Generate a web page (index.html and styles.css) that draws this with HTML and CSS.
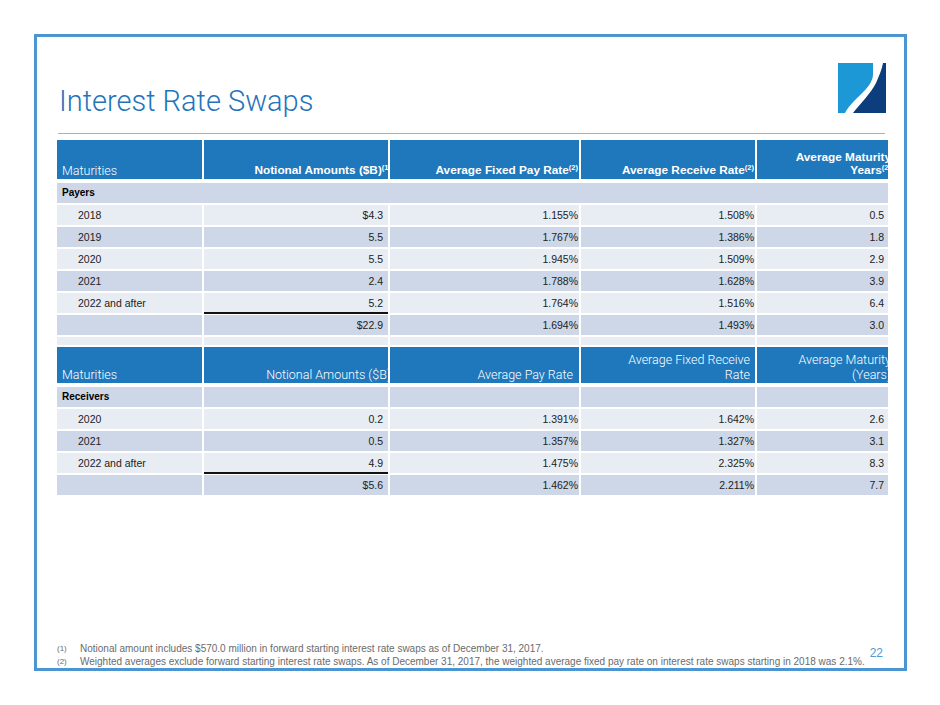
FILE: index.html
```html
<!DOCTYPE html>
<html lang="en">
<head>
<meta charset="utf-8">
<title>Interest Rate Swaps</title>
<link rel="stylesheet" href="styles.css">
</head>
<body>
<div class="slide">
  <header class="top">
    <h1 class="title">Interest Rate Swaps</h1>
    <svg class="logo" width="48" height="50" viewBox="0 0 48 50" aria-hidden="true">
      <path d="M0 0H35V12C34 26 14 36 7 50H0Z" fill="#1b98d5"/>
      <path d="M45 0H48V50H15C22 41 33 30 38 20C41 13 44 6 45 0Z" fill="#0c3d7c"/>
    </svg>
  </header>
  <div class="rule"></div>

  <div class="grid">
    <div class="hd h1 first"><span>Maturities</span></div>
    <div class="hd h1 bold over"><span>Notional Amounts ($B)<sup>(1)</sup></span></div>
    <div class="hd h1 bold pr1"><span>Average Fixed Pay Rate<sup>(2)</sup></span></div>
    <div class="hd h1 bold pr1"><span>Average Receive Rate<sup>(2)</sup></span></div>
    <div class="hd h1 bold over"><span>Average Maturity<br>Years<sup>(2)</sup></span></div>

    <div class="group dk">Payers</div>

    <div class="cell lt yr">2018</div><div class="cell lt p2">$4.3</div><div class="cell lt p3">1.155%</div><div class="cell lt p3">1.508%</div><div class="cell lt p5">0.5</div>
    <div class="cell dk yr">2019</div><div class="cell dk p2">5.5</div><div class="cell dk p3">1.767%</div><div class="cell dk p3">1.386%</div><div class="cell dk p5">1.8</div>
    <div class="cell lt yr">2020</div><div class="cell lt p2">5.5</div><div class="cell lt p3">1.945%</div><div class="cell lt p3">1.509%</div><div class="cell lt p5">2.9</div>
    <div class="cell dk yr">2021</div><div class="cell dk p2">2.4</div><div class="cell dk p3">1.788%</div><div class="cell dk p3">1.628%</div><div class="cell dk p5">3.9</div>
    <div class="cell lt yr">2022 and after</div><div class="cell lt p2 sum">5.2</div><div class="cell lt p3">1.764%</div><div class="cell lt p3">1.516%</div><div class="cell lt p5">6.4</div>
    <div class="cell dk yr"></div><div class="cell dk p2">$22.9</div><div class="cell dk p3">1.694%</div><div class="cell dk p3">1.493%</div><div class="cell dk p5">3.0</div>

    <div class="spacer lt"></div><div class="spacer lt"></div><div class="spacer lt"></div><div class="spacer lt"></div><div class="spacer lt"></div>

    <div class="hd h2 first"><span>Maturities</span></div>
    <div class="hd h2 over"><span>Notional Amounts ($B)</span></div>
    <div class="hd h2 pr6"><span>Average Pay Rate</span></div>
    <div class="hd h2 pr5"><span>Average Fixed Receive<br>Rate</span></div>
    <div class="hd h2 over"><span>Average Maturity<br>(Years)</span></div>

    <div class="cell dk lbl">Receivers</div><div class="cell dk"></div><div class="cell dk"></div><div class="cell dk"></div><div class="cell dk"></div>

    <div class="cell lt yr">2020</div><div class="cell lt p2">0.2</div><div class="cell lt p3">1.391%</div><div class="cell lt p3">1.642%</div><div class="cell lt p5">2.6</div>
    <div class="cell dk yr">2021</div><div class="cell dk p2">0.5</div><div class="cell dk p3">1.357%</div><div class="cell dk p3">1.327%</div><div class="cell dk p5">3.1</div>
    <div class="cell lt yr">2022 and after</div><div class="cell lt p2 sum">4.9</div><div class="cell lt p3">1.475%</div><div class="cell lt p3">2.325%</div><div class="cell lt p5">8.3</div>
    <div class="cell dk yr"></div><div class="cell dk p2">$5.6</div><div class="cell dk p3">1.462%</div><div class="cell dk p3">2.211%</div><div class="cell dk p5">7.7</div>
  </div>

  <footer class="foot">
    <div class="notes">
      <span class="mark">(1)</span><span>Notional amount includes $570.0 million in forward starting interest rate swaps as of December 31, 2017.</span>
      <span class="mark">(2)</span><span>Weighted averages exclude forward starting interest rate swaps. As of December 31, 2017, the weighted average fixed pay rate on interest rate swaps starting in 2018 was 2.1%.</span>
    </div>
    <div class="pg">22</div>
  </footer>
</div>
</body>
</html>
```
FILE: styles.css
```css
* {
  box-sizing: border-box;
  margin: 0;
  padding: 0;
}

body {
  margin: 0;
  background: #ffffff;
  font-family: "Liberation Sans", Arial, sans-serif;
}

.slide {
  margin: 34px 0 0 34px;
  width: 873px;
  height: 637px;
  border: 3px solid #4a95d2;
  padding: 0 16px 0 20px;
  display: flex;
  flex-direction: column;
}

.top {
  display: flex;
  justify-content: space-between;
  align-items: flex-start;
  height: 96px;
}

.title {
  margin: 47px 0 0 2px;
  font-family: Roboto, "Liberation Sans", sans-serif;
  font-weight: 300;
  font-size: 29px;
  line-height: 35px;
  color: #1f75bb;
}

.logo {
  display: block;
  margin: 26px 2px 0 0;
}

.rule {
  height: 1px;
  margin: 0 3px 0 1px;
  background: #8fb8dc;
}

.grid {
  margin-top: 6px;
  display: grid;
  grid-template-columns: 145px 184px 189px 174px 131px;
  column-gap: 2px;
  row-gap: 2px;
}

/* header cells */
.hd {
  background: #1f77bc;
  color: #ffffff;
  display: flex;
  flex-direction: column;
  justify-content: flex-end;
  align-items: flex-end;
  text-align: right;
  white-space: nowrap;
  overflow: hidden;
}

.hd span {
  display: block;
}

.h1 {
  height: 39px;
  margin-bottom: 2px;
  font-size: 11.8px;
  line-height: 13px;
  padding-bottom: 2px;
}

.h2 {
  height: 36px;
  margin-bottom: 2px;
  font-family: Roboto, "Liberation Sans", sans-serif;
  font-weight: 300;
  font-size: 12.5px;
  line-height: 15px;
  padding-bottom: 1px;
}

.bold {
  font-weight: bold;
}

.hd.first {
  align-items: flex-start;
  padding-left: 5px;
  font-family: Roboto, "Liberation Sans", sans-serif;
  font-weight: 300;
  font-size: 12.5px;
}

.over span {
  margin-right: -3px;
}

.pr1 { padding-right: 1px; }
.pr5 { padding-right: 5px; }
.pr6 { padding-right: 6px; }

.hd sup {
  font-size: 7.5px;
  line-height: 0;
  vertical-align: 4px;
}

/* body cells */
.lt { background: #e8ecf3; }
.dk { background: #cdd7e7; }

.cell {
  height: 20px;
  line-height: 20px;
  font-size: 10.5px;
  color: #222222;
  text-align: right;
  white-space: nowrap;
}

.yr {
  text-align: left;
  padding-left: 21px;
}

.p2 { padding-right: 5px; }
.p3 { padding-right: 1px; }
.p5 { padding-right: 4px; }

.sum {
  height: 21px;
  margin-bottom: -1px;
  border-bottom: 2px solid #111111;
  line-height: 20px;
}

.group {
  grid-column: 1 / -1;
  height: 20px;
  line-height: 20px;
  padding-left: 5px;
  font-size: 10px;
  font-weight: bold;
  color: #000000;
}

.lbl {
  text-align: left;
  padding-left: 5px;
  font-size: 10px;
  font-weight: bold;
  color: #000000;
}

.spacer {
  height: 8px;
}

/* footer */
.foot {
  margin-top: auto;
  display: flex;
  align-items: flex-start;
  padding-bottom: 0;
}

.notes {
  display: grid;
  grid-template-columns: 23px auto;
  font-size: 10px;
  line-height: 13px;
  color: #6b6b6b;
  white-space: nowrap;
}

.mark {
  font-size: 8px;
}

.pg {
  margin: 4px 5px 0 auto;
  font-size: 12px;
  line-height: 14px;
  color: #4d9ad6;
}
```
